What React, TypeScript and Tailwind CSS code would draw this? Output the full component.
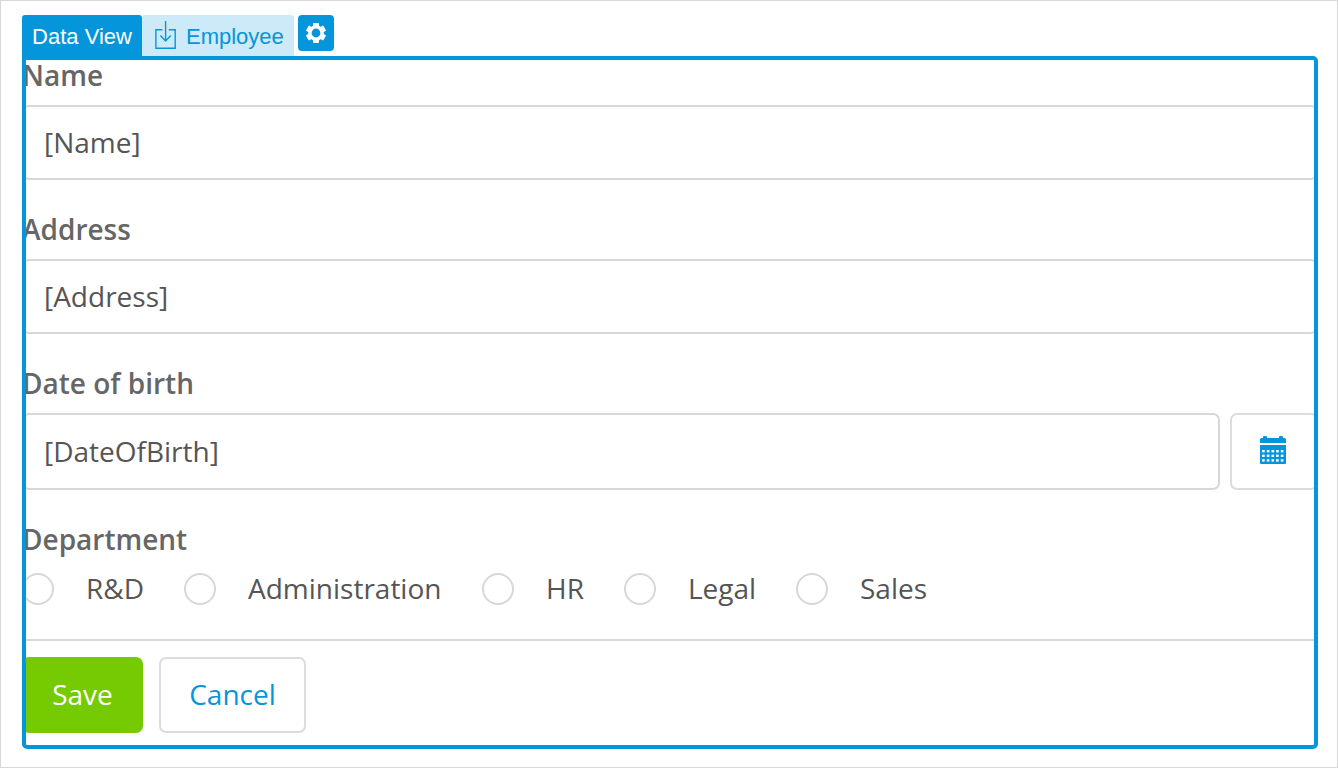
import React from "react";

const fieldClass =
  "flex items-center rounded-[7px] border-2 border-[#d7d7d7] bg-white pb-[2px] pl-5 text-[28px] leading-[38px] text-[#555]";

function Label({ children }: { children: React.ReactNode }) {
  return (
    <div className="h-[30px] text-[28px] leading-[30px] font-semibold whitespace-nowrap text-[#666]">
      {children}
    </div>
  );
}

function EntityIcon() {
  return (
    <svg width="22" height="29" viewBox="0 0 22 29" fill="none" stroke="#0595db" strokeWidth="1.4">
      <path d="M7.4 8.700H.9v18.600h19.300V8.700H13.800" />
      <path d="M10.600 0v20M5.400 14.500l5.200 5.500 5.200-5.500" />
    </svg>
  );
}

function GearIcon() {
  return (
    <svg width="22" height="20" viewBox="-11 -10 22 20" fill="#fff">
      <circle r="7.8" />
      {[0, 60, 120].map((angle) => (
        <rect key={angle} x="-3" y="-10" width="6" height="20" rx="0.8" transform={`rotate(${angle})`} />
      ))}
      <circle r="4.4" fill="#0595db" />
    </svg>
  );
}

function CalendarIcon() {
  const columns = [2.1, 6.8, 11.5, 16.1, 20.8];
  const rows = [14, 18.6, 23.2];
  return (
    <svg width="26" height="28" viewBox="0 0 26 28">
      <path
        fill="#0595db"
        d="M0 7V3.500Q0 2 1.500 2H3V1q0-1 1-1h2q1 0 1 1v1h12V1q0-1 1-1h2q1 0 1 1v1h1.500Q26 2 26 3.500V7zM0 9h26v18q0 1-1 1H1q-1 0-1-1z"
      />
      {rows.map((y) =>
        columns.map((x) => <rect key={`${x}-${y}`} x={x} y={y} width="2.6" height="2.4" fill="#fff" />)
      )}
    </svg>
  );
}

const departments = [
  { name: "R&D", width: "w-[162px]" },
  { name: "Administration", width: "w-[298px]" },
  { name: "HR", width: "w-[142px]" },
  { name: "Legal", width: "w-[172px]" },
  { name: "Sales", width: "w-[172px]" },
];

export default function App() {
  return (
    <div className="h-[768px] w-[1338px] overflow-hidden border border-[#d7d7d7] bg-white px-[21px] pt-[14px] font-['Open_Sans',sans-serif]">
      <div className="flex h-[41px] items-start font-['Liberation_Sans',sans-serif] text-[22px]">
        <div className="flex h-[41px] w-[120px] items-center justify-center rounded-t-[3px] bg-[#0595db] pt-[2px] whitespace-nowrap text-white">
          Data View
        </div>
        <div className="flex h-[41px] w-[152px] items-center gap-[9px] rounded-t-[3px] bg-[#cdeaf8] pl-[13px] text-[#0595db]">
          <EntityIcon />
          <span className="pt-[2px]">Employee</span>
        </div>
        <button className="ml-1 flex h-9 w-9 items-center justify-center rounded-[4px] bg-[#0595db]">
          <GearIcon />
        </button>
      </div>
      <div className="h-[693px] w-[1296px] overflow-hidden rounded-[5px] rounded-tl-none border-4 border-[#0595db]">
        <div className="-mx-1">
          <Label>Name</Label>
          <div className={`${fieldClass} mt-[15px] h-[75px]`}>[Name]</div>
          <div className="h-[34px]" />
          <Label>Address</Label>
          <div className={`${fieldClass} mt-[15px] h-[75px]`}>[Address]</div>
          <div className="h-[34px]" />
          <Label>Date of birth</Label>
          <div className="mt-[15px] flex h-[77px] gap-[10px]">
            <div className={`${fieldClass} w-[1198px]`}>[DateOfBirth]</div>
            <button className="flex w-[88px] items-center justify-center rounded-[7px] border-2 border-[#dcdcdc] pr-[2px] pb-[3px]">
              <CalendarIcon />
            </button>
          </div>
          <div className="h-[34px]" />
          <Label>Department</Label>
          <div className="mt-[19px] flex h-8">
            {departments.map((d) => (
              <label key={d.name} className={`flex items-center ${d.width}`}>
                <span className="h-8 w-8 shrink-0 rounded-full border-2 border-[#d7d7d7]" />
                <span className="ml-8 pb-[2px] text-[28px] leading-8 whitespace-nowrap text-[#555]">{d.name}</span>
              </label>
            ))}
          </div>
          <div className="mt-[34px] h-[2px] bg-[#d7d7d7]" />
          <div className="mt-4 flex gap-4 text-[28px] leading-[38px]">
            <button className="h-[76px] w-[121px] rounded-[7px] bg-[#76ca02] pb-[2px] text-white">Save</button>
            <button className="h-[76px] w-[147px] rounded-[7px] border-2 border-[#dcdcdc] pb-[2px] text-[#0595db]">
              Cancel
            </button>
          </div>
        </div>
      </div>
    </div>
  );
}
